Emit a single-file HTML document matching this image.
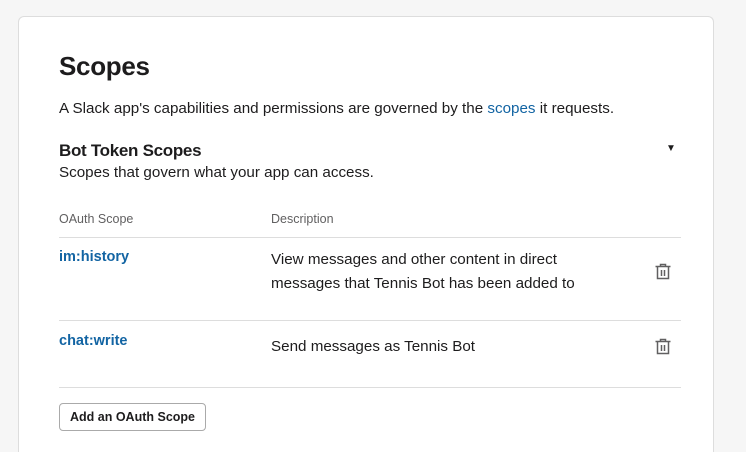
<!DOCTYPE html><html><head><style>
html,body{margin:0;height:452px;overflow:hidden}
body{background:#f6f6f6;width:746px;font-family:"Liberation Sans",sans-serif;color:#1d1c1d;position:relative}
.card{position:absolute;left:18px;top:16px;width:696px;height:436px;background:#fff;border:1px solid #ddd;border-bottom:none;border-radius:6px 6px 0 0;box-sizing:border-box}
.a{position:absolute;white-space:nowrap}
.l{position:absolute;left:40px;width:622px;height:1px;background:#ddd}
.t{position:absolute;left:636px}
.b{font-size:15.2px}
</style></head><body><div class="card">
<div class="a" style="left:40px;top:34px;font-size:26px;font-weight:bold;letter-spacing:-.3px">Scopes</div>
<div class="a b" style="left:40px;top:83px">A Slack app's capabilities and permissions are governed by the <span style="color:#1264a3">scopes</span> it requests.</div>
<div class="a" style="left:40px;top:124px;font-size:17px;font-weight:bold;letter-spacing:-.3px">Bot Token Scopes</div>
<div class="a" style="left:647px;top:126px;font-size:10px">▼</div>
<div class="a b" style="left:40px;top:147px">Scopes that govern what your app can access.</div>
<div class="a" style="left:40px;top:195px;font-size:12.5px;color:#616061">OAuth Scope</div>
<div class="a" style="left:252px;top:195px;font-size:12.5px;color:#616061">Description</div>
<div class="l" style="top:220px"></div>
<div class="a" style="left:40px;top:232px;font-size:14.5px;font-weight:bold;color:#1264a3">im:history</div>
<div class="a b" style="left:252px;top:231px;line-height:24px">View messages and other content in direct<br>messages that Tennis Bot has been added to</div>
<svg class="t" style="left:635px;top:245px" width="18" height="18" viewBox="0 0 18 18" fill="none" stroke="#616061" stroke-width="1.5"><path d="M1.5 4.5h15M6.5 4.5V2.5h5v2M3.5 4.5v12h11v-12M7.5 8v6M10.5 8v6"/></svg>
<div class="l" style="top:303px"></div>
<div class="a" style="left:40px;top:316px;font-size:14.5px;font-weight:bold;color:#1264a3">chat:write</div>
<div class="a b" style="left:252px;top:321px">Send messages as Tennis Bot</div>
<svg class="t" style="left:635px;top:320px" width="18" height="18" viewBox="0 0 18 18" fill="none" stroke="#616061" stroke-width="1.5"><path d="M1.5 4.5h15M6.5 4.5V2.5h5v2M3.5 4.5v12h11v-12M7.5 8v6M10.5 8v6"/></svg>
<div class="l" style="top:370px"></div>
<div class="a" style="left:40px;top:386px;width:145px;height:26px;border:1px solid #aaa;border-radius:4px;font-size:12.5px;font-weight:bold;text-align:center;line-height:26px">Add an OAuth Scope</div>
</div></body></html>
